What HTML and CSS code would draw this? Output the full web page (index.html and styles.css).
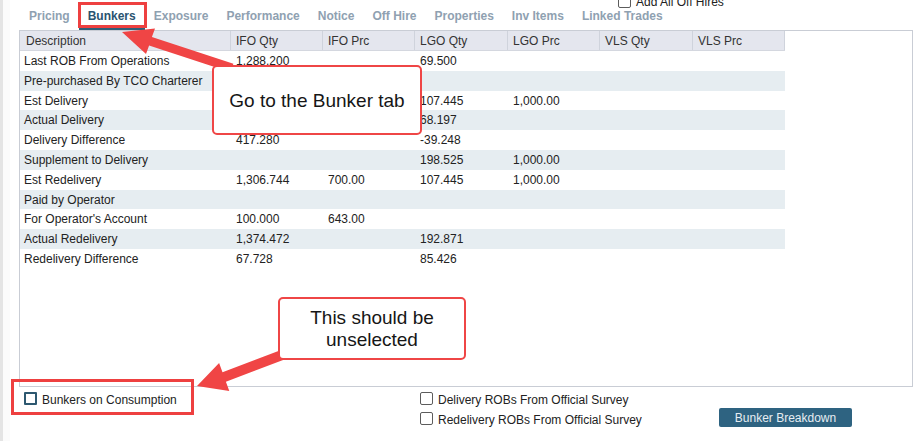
FILE: index.html
```html
<!DOCTYPE html>
<html>
<head>
<meta charset="utf-8">
<link rel="stylesheet" href="styles.css">
</head>
<body>
<div class="page">
  <div class="bgwin"></div>
  <div class="panel">
    <div class="topline">
      <label class="topcheck"><span class="cb"></span><span>Add All Off Hires</span></label>
    </div>
    <nav class="tabs">
      <span class="tab">Pricing</span>
      <span class="tab active">Bunkers</span>
      <span class="tab">Exposure</span>
      <span class="tab">Performance</span>
      <span class="tab">Notice</span>
      <span class="tab">Off Hire</span>
      <span class="tab">Properties</span>
      <span class="tab">Inv Items</span>
      <span class="tab">Linked Trades</span>
    </nav>
    <div class="frame">
      <div class="thead">
        <div>Description</div><div>IFO Qty</div><div>IFO Prc</div><div>LGO Qty</div><div>LGO Prc</div><div>VLS Qty</div><div>VLS Prc</div>
      </div>
      <div class="tbody">
        <div class="row"><div>Last ROB From Operations</div><div>1,288.200</div><div></div><div>69.500</div><div></div><div></div><div></div></div>
        <div class="row"><div>Pre-purchased By TCO Charterer</div><div></div><div></div><div></div><div></div><div></div><div></div></div>
        <div class="row"><div>Est Delivery</div><div></div><div></div><div>107.445</div><div>1,000.00</div><div></div><div></div></div>
        <div class="row"><div>Actual Delivery</div><div></div><div></div><div>68.197</div><div></div><div></div><div></div></div>
        <div class="row"><div>Delivery Difference</div><div>417.280</div><div></div><div>-39.248</div><div></div><div></div><div></div></div>
        <div class="row"><div>Supplement to Delivery</div><div></div><div></div><div>198.525</div><div>1,000.00</div><div></div><div></div></div>
        <div class="row"><div>Est Redelivery</div><div>1,306.744</div><div>700.00</div><div>107.445</div><div>1,000.00</div><div></div><div></div></div>
        <div class="row"><div>Paid by Operator</div><div></div><div></div><div></div><div></div><div></div><div></div></div>
        <div class="row"><div>For Operator's Account</div><div>100.000</div><div>643.00</div><div></div><div></div><div></div><div></div></div>
        <div class="row"><div>Actual Redelivery</div><div>1,374.472</div><div></div><div>192.871</div><div></div><div></div><div></div></div>
        <div class="row"><div>Redelivery Difference</div><div>67.728</div><div></div><div>85.426</div><div></div><div></div><div></div></div>
      </div>
    </div>
    <div class="bottom">
      <label class="cons"><span class="cb cb-dark"></span><span class="lbl">Bunkers on Consumption</span></label>
      <div class="surveys">
        <label class="survey"><span class="cb"></span><span class="lbl">Delivery ROBs From Official Survey</span></label>
        <label class="survey"><span class="cb"></span><span class="lbl">Redelivery ROBs From Official Survey</span></label>
      </div>
      <button class="btn">Bunker Breakdown</button>
    </div>
  </div>

  <div class="hl hl-tab"></div>
  <div class="hl hl-cons"></div>
  <svg class="arrows" width="914" height="441" viewBox="0 0 914 441">
    <polygon fill="#f04545" points="122,32 155,28.5 151.9,37 233.4,63.7 230.6,72.3 149.1,45.6 146,54"/>
    <polygon fill="#f04545" points="197,386 219.1,362.9 222.5,372.3 288.3,347.3 291.7,356.7 225.9,381.7 229.3,391.1"/>
  </svg>
  <div class="callout c1">Go to the Bunker tab</div>
  <div class="callout c2">This should be<br>unselected</div>
</div>
</body>
</html>
```

FILE: styles.css
```css
* { box-sizing: border-box; }

body {
  margin: 0;
  font-family: "Liberation Sans", Arial, sans-serif;
  font-size: 12px;
  color: #222;
  background: #fff;
}

.page {
  position: relative;
  width: 914px;
  height: 441px;
  overflow: hidden;
  display: flex;
}

.bgwin {
  width: 10px;
  flex: none;
  border-left: 3px solid #e4e4e4;
  background: #fbfbfb;
}

.panel {
  flex: 1;
  display: flex;
  flex-direction: column;
  padding-right: 1px;
}

.topline {
  height: 7px;
  padding-left: 608px;
}
.topcheck {
  display: flex;
  align-items: center;
  gap: 5px;
  margin-top: -5px;
  height: 13px;
  line-height: 13px;
  color: #222;
}
.topcheck span:last-child { padding-top: 2px; }

.cb {
  display: inline-block;
  width: 13px;
  height: 13px;
  flex: none;
  border: 1px solid #5c5c5c;
  border-radius: 2px;
  background: #fff;
}
.cb-dark {
  border: 2px solid #2d5870;
  border-radius: 1px;
}

.tabs {
  display: flex;
  height: 23px;
  padding-left: 10px;
}
.tab {
  padding: 2px 9px 0;
  line-height: 14px;
  font-weight: bold;
  color: #8fa1b1;
  border-bottom: 2px solid transparent;
}
.tab.active {
  color: #2a5370;
  border-bottom-color: #2e5e78;
}

.frame {
  margin-left: 9px;
  height: 357px;
  border: 1px solid #c9cdd5;
}

.thead, .row {
  display: grid;
  grid-template-columns: 211px 92px 92px 93px 92px 93px 92px;
  width: 765px;
}
.thead {
  height: 20px;
  background: #e4e6ee;
  border-bottom: 1px solid #d4d7df;
}
.thead div {
  border-right: 1px solid #cfd3dc;
  padding-left: 5px;
  padding-top: 1px;
  line-height: 18px;
  color: #333;
}
.thead div:first-child { padding-left: 6px; }

.row {
  height: 19.8px;
}
.row div {
  padding-left: 5px;
  padding-top: 2px;
  line-height: 17.8px;
  white-space: nowrap;
}
.row div:first-child { padding-left: 4px; }
.row:nth-child(even) { background: #e6edf1; }

.bottom {
  display: flex;
  padding-top: 5px;
  flex: 1;
}
.cons {
  margin-left: 14px;
  width: 396px;
  flex: none;
  display: flex;
  align-items: flex-start;
  gap: 5px;
  height: 13px;
  line-height: 13px;
}
.lbl { padding-top: 2px; }
.surveys {
  width: 299px;
  flex: none;
  display: flex;
  flex-direction: column;
  gap: 7px;
}
.survey {
  display: flex;
  align-items: flex-start;
  gap: 5px;
  height: 13px;
  line-height: 13px;
}
.btn {
  margin-top: 16px;
  width: 133px;
  height: 19px;
  padding: 1px 0 0;
  border: none;
  border-radius: 2px;
  background: #2e6381;
  color: #e6edf2;
  font-family: "Liberation Sans", Arial, sans-serif;
  font-size: 12px;
  line-height: 18px;
}

.hl {
  position: absolute;
  border: 3px solid #ee4040;
}
.hl-tab { left: 78px; top: 2px; width: 69px; height: 26px; }
.hl-cons { left: 11px; top: 379px; width: 183px; height: 36px; }

.arrows {
  position: absolute;
  left: 0;
  top: 0;
}

.callout {
  position: absolute;
  background: #fff;
  border: 2px solid #ef4646;
  border-radius: 5px;
  display: flex;
  align-items: center;
  justify-content: center;
  text-align: center;
  font-size: 19px;
  line-height: 22px;
  color: #161616;
  padding-top: 1px;
}
.c1 { left: 212px; top: 65px; width: 210px; height: 70px; }
.c2 { left: 278px; top: 297px; width: 188px; height: 63px; }
```
